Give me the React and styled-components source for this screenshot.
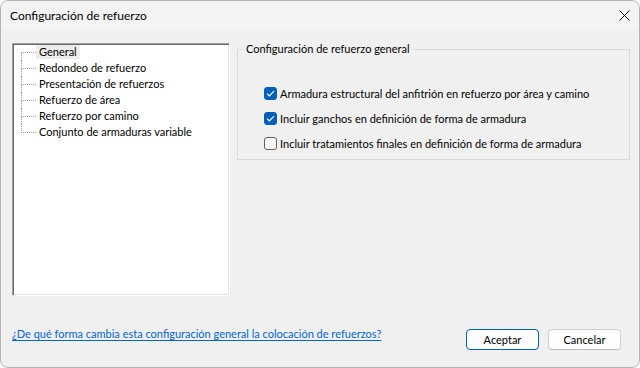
import React from "react";
import styled, { createGlobalStyle, css } from "styled-components";

const Global = createGlobalStyle`
  html, body { margin: 0; padding: 0; background: #ffffff; }
  body {
    font-family: Lato, "Liberation Sans", sans-serif;
    font-size: 11px;
    color: #000000;
  }
  *, *::before, *::after { box-sizing: border-box; }
`;

const Window = styled.div`
  width: 640px;
  height: 368px;
  display: flex;
  flex-direction: column;
  background: #f0f0f0;
  border: 1px solid #b4b4b4;
  border-radius: 8px;
  overflow: hidden;
`;

const TitleBar = styled.div`
  height: 29px;
  flex: none;
  display: flex;
  align-items: center;
  justify-content: space-between;
  padding-left: 9px;
  background: #f3f3f3;
  font-size: 12px;
`;

const Title = styled.span`
  line-height: 16px;
`;

const CloseButton = styled.button`
  width: 30px;
  height: 29px;
  border: 0;
  padding: 0;
  background: transparent;
  display: flex;
  align-items: center;
  justify-content: center;
`;

const Body = styled.div`
  flex: 1;
  display: flex;
  flex-direction: column;
  padding: 13px 9px 0 11px;
`;

const MainRow = styled.div`
  display: flex;
  align-items: flex-start;
  gap: 7px;
`;

const TreeBox = styled.ul`
  width: 218px;
  height: 253px;
  flex: none;
  margin: 0;
  padding: 0 0 0 1px;
  list-style: none;
  background: #ffffff;
  border: 1px solid;
  border-color: #a0a0a0 #ffffff #ffffff #a0a0a0;
  box-shadow: inset 1px 1px 0 #696969, inset -1px -1px 0 #e3e3e3;
`;

const TreeRow = styled.li`
  position: relative;
  height: 16px;
  display: flex;
  align-items: flex-start;
  padding-left: 22px;

  &::before {
    content: "";
    position: absolute;
    left: 7px;
    width: 15px;
    top: 8px;
    border-top: 1px dotted #a0a0a0;
  }

  &::after {
    content: "";
    position: absolute;
    left: 7px;
    border-left: 1px dotted #a0a0a0;
    ${({ $pos }) =>
      $pos === "first"
        ? css`top: 8px; bottom: 0;`
        : $pos === "last"
        ? css`top: 0; height: 9px;`
        : css`top: 0; bottom: 0;`}
  }
`;

const TreeLabel = styled.span`
  display: inline-block;
  margin-top: 1px;
  height: 14px;
  line-height: 14px;
  padding: 0 3px;
  white-space: nowrap;
  background: ${({ $selected }) => ($selected ? "#ececec" : "transparent")};
`;

const Group = styled.fieldset`
  flex: 1;
  height: 117px;
  margin: 0;
  padding: 0 4px;
  border: 1px solid #d9d9d9;
  min-width: 0;
`;

const Legend = styled.legend`
  padding: 0 4px;
  line-height: 12px;
  font-size: 11px;
`;

const CheckList = styled.div`
  display: flex;
  flex-direction: column;
  gap: 9px;
  padding: 30px 0 0 22px;
`;

const CheckRow = styled.label`
  height: 16px;
  display: flex;
  align-items: center;
  gap: 3px;
  white-space: nowrap;
`;

const Box = styled.span`
  width: 13px;
  height: 13px;
  flex: none;
  border-radius: 3px;
  display: flex;
  align-items: center;
  justify-content: center;
  ${({ $checked }) =>
    $checked
      ? css`background: #005fb8; border: 1px solid #005fb8;`
      : css`background: #f7f7f7; border: 1px solid #5f5f5f;`}
`;

const Footer = styled.div`
  margin-top: auto;
  display: flex;
  align-items: center;
  justify-content: space-between;
  padding: 0 9px 15px 0;
`;

const Link = styled.a`
  color: #0066cc;
  text-decoration: underline;
  text-underline-offset: 2px;
  line-height: 16px;
  margin-bottom: 10px;
  cursor: pointer;
`;

const Buttons = styled.div`
  display: flex;
  gap: 9px;
`;

const Button = styled.button`
  width: 73px;
  height: 21px;
  padding: 0;
  font-family: inherit;
  font-size: 11px;
  color: #000000;
  background: #fdfdfd;
  border-radius: 4px;
  border: 1px solid ${({ $primary }) => ($primary ? "#005fb8" : "#d0d0d0")};
  ${({ $primary }) => !$primary && css`border-bottom-color: #bcbcbc;`}
`;

const CheckMark = () => (
  <svg width="9" height="9" viewBox="0 0 9 9">
    <polyline points="1,4.6 3.4,7 8,2.2" fill="none" stroke="#ffffff" strokeWidth="1.2" />
  </svg>
);

const CloseIcon = () => (
  <svg width="11" height="11" viewBox="0 0 11 11">
    <path d="M0.5 0.5 L10.5 10.5 M10.5 0.5 L0.5 10.5" stroke="#000000" strokeWidth="1" fill="none" />
  </svg>
);

const treeItems = [
  "General",
  "Redondeo de refuerzo",
  "Presentación de refuerzos",
  "Refuerzo de área",
  "Refuerzo por camino",
  "Conjunto de armaduras variable",
];

const options = [
  { label: "Armadura estructural del anfitrión en refuerzo por área y camino", checked: true },
  { label: "Incluir ganchos en definición de forma de armadura", checked: true },
  { label: "Incluir tratamientos finales en definición de forma de armadura", checked: false },
];

export default function App() {
  return (
    <>
      <Global />
      <Window>
        <TitleBar>
          <Title>Configuración de refuerzo</Title>
          <CloseButton aria-label="Cerrar">
            <CloseIcon />
          </CloseButton>
        </TitleBar>
        <Body>
          <MainRow>
            <TreeBox>
              {treeItems.map((item, i) => (
                <TreeRow
                  key={item}
                  $pos={i === 0 ? "first" : i === treeItems.length - 1 ? "last" : "mid"}
                >
                  <TreeLabel $selected={i === 0}>{item}</TreeLabel>
                </TreeRow>
              ))}
            </TreeBox>
            <Group>
              <Legend>Configuración de refuerzo general</Legend>
              <CheckList>
                {options.map((o) => (
                  <CheckRow key={o.label}>
                    <Box $checked={o.checked}>{o.checked && <CheckMark />}</Box>
                    {o.label}
                  </CheckRow>
                ))}
              </CheckList>
            </Group>
          </MainRow>
          <Footer>
            <Link>¿De qué forma cambia esta configuración general la colocación de refuerzos?</Link>
            <Buttons>
              <Button $primary>Aceptar</Button>
              <Button>Cancelar</Button>
            </Buttons>
          </Footer>
        </Body>
      </Window>
    </>
  );
}
